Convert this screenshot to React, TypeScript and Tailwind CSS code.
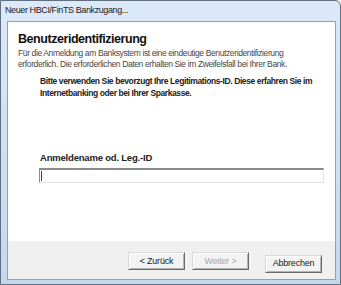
import React from 'react';

const font = { fontFamily: '"Liberation Sans", Arial, sans-serif' };

const WizardButton: React.FC<{ label: string; disabled?: boolean }> = ({ label, disabled }) => (
  <button
    className={
      'h-[18px] w-[57px] text-[9px] leading-none tracking-[-0.2px] border border-t-[#d8d8d8] border-l-[#d8d8d8] border-b-[#6a6a6a] border-r-[#6a6a6a] bg-[#f3f3f3] shadow-[inset_1px_1px_0_#ffffff,inset_-1px_-1px_0_#b4b4b4] ' +
      (disabled ? 'text-[#a6a6a6]' : 'text-[#1a1a1a]')
    }
  >
    {label}
  </button>
);

export default function App() {
  return (
    <div className="w-[341px] h-[285px] overflow-hidden bg-[#f4f4f4]" style={font}>
      <div className="w-[341px] h-[285px] bg-gradient-to-b from-[#dce9f8] to-[#c3d8ef] border border-[#5f6f80] rounded-tr-[6px] flex flex-col">
        <div className="h-[20px] flex items-center pl-[4px] text-[9px] tracking-[-0.4px] text-[#1a1a1a]">
          Neuer HBCI/FinTS Bankzugang...
        </div>
        <div className="ml-[6px] mr-[4px] h-[259px] border border-[#8da2b8] bg-white flex flex-col">
          <div className="flex-1 pl-[10px] pt-[10px] whitespace-nowrap">
            <div className="text-[12.5px] font-bold leading-[15px] tracking-[-0.45px] text-[#111]">
              Benutzeridentifizierung
            </div>
            <p className="text-[8.5px] leading-[11px] text-[#474747] mt-[1px] tracking-[-0.38px]">
              Für die Anmeldung am Banksystem ist eine eindeutige Benutzeridentifizierung
              <br />
              erforderlich. Die erforderlichen Daten erhalten Sie im Zweifelsfall bei Ihrer Bank.
            </p>
            <p className="text-[8.5px] leading-[12px] font-bold text-[#222] ml-[22px] mt-[5px] tracking-[-0.4px]">
              Bitte verwenden Sie bevorzugt Ihre Legitimations-ID. Diese erfahren Sie im
              <br />
              Internetbanking oder bei Ihrer Sparkasse.
            </p>
            <div className="ml-[22px] mt-[53px] text-[9.5px] font-bold text-[#222] leading-[12px] tracking-[-0.2px]">
              Anmeldename od. Leg.-ID
            </div>
            <div className="ml-[21px] mt-[4px] w-[285px] h-[15px] border-t-2 border-l border-t-[#8a8a8a] border-l-[#8a8a8a] border-b border-r border-b-[#e3e3e3] border-r-[#e3e3e3] bg-white flex items-center">
              <div className="ml-[1px] w-[1px] h-[10px] bg-[#444]" />
            </div>
          </div>
          <div className="h-[38px] bg-[#f0f0f0] flex items-center justify-end pr-[13px] pt-[2px]">
            <div className="flex gap-[7px]">
              <WizardButton label="< Zurück" />
              <WizardButton label="Weiter >" disabled />
            </div>
            <div className="ml-[16px]">
              <WizardButton label="Abbrechen" />
            </div>
          </div>
        </div>
      </div>
    </div>
  );
}
